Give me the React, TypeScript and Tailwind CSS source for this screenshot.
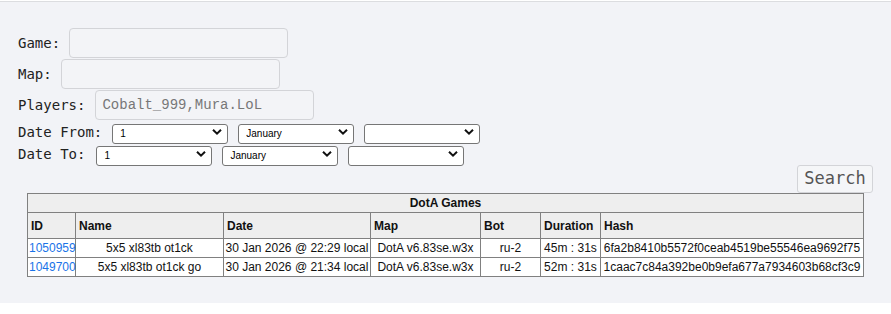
import { useState } from "react";

const mono = "font-['DejaVu_Sans_Mono',monospace]";

function Chevron() {
  return (
    <svg
      className="pointer-events-none absolute right-[6px] top-1/2 -translate-y-1/2"
      width="10"
      height="7"
      viewBox="0 0 10 7"
    >
      <path d="M1 1.2 L5 5.2 L9 1.2" fill="none" stroke="#111" strokeWidth="2" />
    </svg>
  );
}

function Select({ value, options }: { value: string; options: string[] }) {
  return (
    <div className="relative h-[20px] w-[116px]">
      <select
        defaultValue={value}
        className="h-full w-full appearance-none rounded-[3px] border border-[#767676] bg-white pl-[7px] font-['Liberation_Sans',sans-serif] text-[10px] text-black outline-none"
      >
        {options.map((o) => (
          <option key={o} value={o}>
            {o}
          </option>
        ))}
      </select>
      <Chevron />
    </div>
  );
}

const days = Array.from({ length: 31 }, (_, i) => String(i + 1));
const months = [
  "January",
  "February",
  "March",
  "April",
  "May",
  "June",
  "July",
  "August",
  "September",
  "October",
  "November",
  "December",
];
const years = ["", "2026", "2025", "2024"];

const games = [
  {
    id: "1050959",
    name: "5x5 xl83tb ot1ck",
    date: "30 Jan 2026 @ 22:29 local",
    map: "DotA v6.83se.w3x",
    bot: "ru-2",
    duration: "45m : 31s",
    hash: "6fa2b8410b5572f0ceab4519be55546ea9692f75",
  },
  {
    id: "1049700",
    name: "5x5 xl83tb ot1ck go",
    date: "30 Jan 2026 @ 21:34 local",
    map: "DotA v6.83se.w3x",
    bot: "ru-2",
    duration: "52m : 31s",
    hash: "1caac7c84a392be0b9efa677a7934603b68cf3c9",
  },
];

function DateRow({ label, gap }: { label: string; gap: string }) {
  return (
    <div className="flex h-[22px] items-center">
      <span className={`whitespace-pre ${gap}`}>{label}</span>
      <div className="flex gap-[10px]">
        <Select value="1" options={days} />
        <Select value="January" options={months} />
        <Select value="" options={years} />
      </div>
    </div>
  );
}

export default function App() {
  const [players, setPlayers] = useState("Cobalt_999,Mura.LoL");

  const inputCls =
    "h-[30px] w-[219px] rounded-[4px] border border-[#d3d4d8] bg-[#f3f4f7] px-[6px] py-0 font-['Liberation_Mono',monospace] text-[14px] leading-[24px] text-[#777] outline-none";

  return (
    <div className="min-h-screen bg-white">
      <div className="h-[2px] border-b border-[#dcdde0] bg-white" />
      {/* search panel */}
      <div className={`bg-[#f2f3f7] px-[18px] pt-[26px] pb-[26px] text-[14px] text-[#222] ${mono}`}>
        <div className="flex flex-col gap-[1px]">
          <div className="flex items-center">
            <span className="mr-[9px]">Game:</span>
            <input className={inputCls} />
          </div>
          <div className="flex items-center">
            <span className="mr-[9px]">Map:</span>
            <input className={inputCls} />
          </div>
          <div className="flex items-center">
            <span className="mr-[10px]">Players:</span>
            <input
              className={inputCls}
              value={players}
              onChange={(e) => setPlayers(e.target.value)}
            />
          </div>
        </div>
        <div className="mt-[1px]">
          <DateRow label="Date From:" gap="mr-[10px]" />
          <DateRow label="Date To:" gap="mr-[11px]" />
        </div>
        <div className="flex justify-end">
          <button className="h-[28px] w-[76px] rounded-[3px] border border-[#d3d4d8] bg-[#f5f6f8] text-[17px] text-[#555]">
            Search
          </button>
        </div>

        {/* results */}
        <table className="mx-auto w-[836px] table-fixed border-collapse border border-[#808080] font-['Liberation_Sans',Arial,sans-serif] text-[12px] leading-[14px] text-[#111]">
          <colgroup>
            <col className="w-[48px]" />
            <col className="w-[148px]" />
            <col className="w-[147px]" />
            <col className="w-[110px]" />
            <col className="w-[60px]" />
            <col className="w-[60px]" />
            <col className="w-[263px]" />
          </colgroup>
          <thead>
            <tr className="bg-[#eeeeee]">
              <th colSpan={7} className="h-[19px] border border-[#808080] text-center font-bold">
                DotA Games
              </th>
            </tr>
            <tr className="bg-[#eeeeee]">
              {["ID", "Name", "Date", "Map", "Bot", "Duration", "Hash"].map((h) => (
                <th
                  key={h}
                  className="h-[26px] border border-[#808080] pl-[3px] text-left font-bold"
                >
                  {h}
                </th>
              ))}
            </tr>
          </thead>
          <tbody>
            {games.map((g) => (
              <tr key={g.id} className="bg-white">
                <td className="h-[19px] border border-[#808080] px-[1px] text-center">
                  <a href="#" className="text-[#1a73e8]">
                    {g.id}
                  </a>
                </td>
                <td className="border border-[#808080] px-[1px] text-center">{g.name}</td>
                <td className="whitespace-nowrap border border-[#808080] px-[1px] text-center">
                  {g.date}
                </td>
                <td className="border border-[#808080] px-[1px] text-center">{g.map}</td>
                <td className="border border-[#808080] px-[1px] text-center">{g.bot}</td>
                <td className="whitespace-nowrap border border-[#808080] px-[1px] text-center">
                  {g.duration}
                </td>
                <td className="whitespace-nowrap border border-[#808080] px-[1px] text-center">
                  {g.hash}
                </td>
              </tr>
            ))}
          </tbody>
        </table>
      </div>
    </div>
  );
}
